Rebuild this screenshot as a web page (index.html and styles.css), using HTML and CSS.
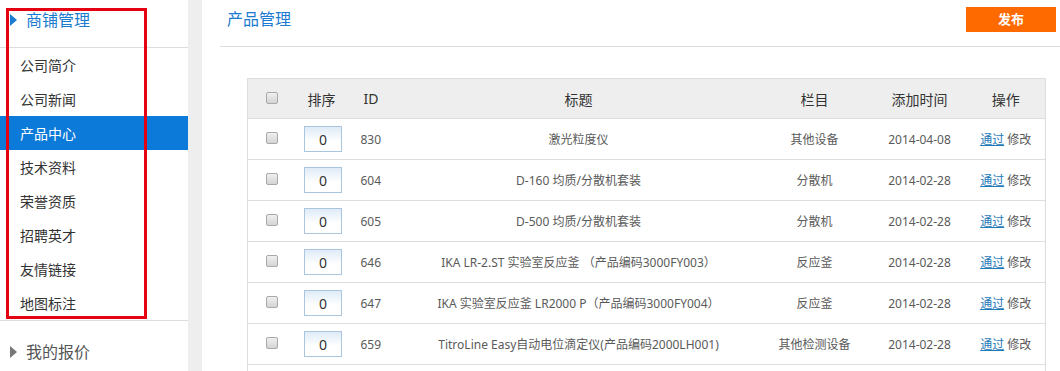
FILE: index.html
```html
<!DOCTYPE html>
<html lang="zh-CN">
<head>
<meta charset="utf-8">
<title>产品管理</title>
<link rel="stylesheet" href="styles.css">
</head>
<body>

<div id="container">
<div id="sidebar">
    <div class="menu-head active"><span class="arrow"></span>商铺管理</div>
    <ul class="menu">
        <li>公司简介</li>
        <li>公司新闻</li>
        <li class="on">产品中心</li>
        <li>技术资料</li>
        <li>荣誉资质</li>
        <li>招聘英才</li>
        <li>友情链接</li>
        <li>地图标注</li>
    </ul>
    <div class="menu-head closed"><span class="arrow"></span>我的报价</div>
    <div class="mark"></div>
</div>

<div id="gutter"></div>

<div id="main">
    <div id="header">
        <span class="title">产品管理</span>
        <a class="btn-publish">发布</a>
    </div>

    <table class="list">
        <colgroup>
            <col class="c-chk"><col class="c-sort"><col class="c-id"><col class="c-title">
            <col class="c-cat"><col class="c-date"><col class="c-op">
        </colgroup>
        <tr class="head">
            <td><span class="chk"></span></td>
            <td>排序</td>
            <td class="id">ID</td>
            <td>标题</td>
            <td>栏目</td>
            <td>添加时间</td>
            <td>操作</td>
        </tr>
        <tr>
            <td><span class="chk"></span></td>
            <td><input class="sort" type="text" value="0"></td>
            <td class="id">830</td>
            <td>激光粒度仪</td>
            <td>其他设备</td>
            <td>2014-04-08</td>
            <td><a class="pass">通过</a> 修改</td>
        </tr>
        <tr>
            <td><span class="chk"></span></td>
            <td><input class="sort" type="text" value="0"></td>
            <td class="id">604</td>
            <td>D-160 均质/分散机套装</td>
            <td>分散机</td>
            <td>2014-02-28</td>
            <td><a class="pass">通过</a> 修改</td>
        </tr>
        <tr>
            <td><span class="chk"></span></td>
            <td><input class="sort" type="text" value="0"></td>
            <td class="id">605</td>
            <td>D-500 均质/分散机套装</td>
            <td>分散机</td>
            <td>2014-02-28</td>
            <td><a class="pass">通过</a> 修改</td>
        </tr>
        <tr>
            <td><span class="chk"></span></td>
            <td><input class="sort" type="text" value="0"></td>
            <td class="id">646</td>
            <td>IKA LR-2.ST 实验室反应釜 （产品编码3000FY003）</td>
            <td>反应釜</td>
            <td>2014-02-28</td>
            <td><a class="pass">通过</a> 修改</td>
        </tr>
        <tr>
            <td><span class="chk"></span></td>
            <td><input class="sort" type="text" value="0"></td>
            <td class="id">647</td>
            <td>IKA 实验室反应釜 LR2000 P（产品编码3000FY004）</td>
            <td>反应釜</td>
            <td>2014-02-28</td>
            <td><a class="pass">通过</a> 修改</td>
        </tr>
        <tr>
            <td><span class="chk"></span></td>
            <td><input class="sort" type="text" value="0"></td>
            <td class="id">659</td>
            <td>TitroLine Easy自动电位滴定仪(产品编码2000LH001)</td>
            <td>其他检测设备</td>
            <td>2014-02-28</td>
            <td><a class="pass">通过</a> 修改</td>
        </tr>
        <tr class="more">
            <td></td><td></td><td></td><td></td><td></td><td></td><td></td>
        </tr>
    </table>
</div>
</div>

</body>
</html>
```

FILE: styles.css
```css
html, body {
    margin: 0px;
    padding: 0px;
    height: 100%;
    overflow: hidden;
}

body {
    font-family: "Noto Sans", "Noto Sans CJK SC", sans-serif;
    font-size: 12px;
    color: #5a5a5a;
    background-color: #ffffff;
}

#container {
    display: flex;
    min-height: 100%;
}

/* left menu */
#sidebar {
    position: relative;
    width: 188px;
    flex: none;
    background-color: #ffffff;
}

.menu-head {
    height: 24px;
    line-height: 24px;
    padding: 8px 0px 15px 10px;
    font-size: 16px;
    color: #555555;
    border-bottom: 1px solid #dddddd;
    display: flex;
    align-items: center;
}

.menu-head.active {
    color: #1b7bd0;
}

.menu-head.closed {
    padding-top: 19px;
    border-bottom: 0px;
}

.arrow {
    width: 0px;
    height: 0px;
    margin-right: 9px;
    border-left: 7px solid #777777;
    border-top: 6px solid transparent;
    border-bottom: 6px solid transparent;
}

.active .arrow {
    border-left-color: #1b7bd0;
}

.menu {
    list-style: none;
    margin: 0px;
    padding: 0px;
    border-bottom: 1px solid #dddddd;
}

.menu li {
    height: 34px;
    line-height: 36px;
    padding-left: 20px;
    font-size: 14px;
    color: #333333;
}

.menu li.on {
    background-color: #0c7ad9;
    color: #ffffff;
}

.mark {
    position: absolute;
    left: 6px;
    top: 8px;
    width: 135px;
    height: 305px;
    border: 3px solid #e50012;
}

#gutter {
    width: 14px;
    flex: none;
    background-color: #eeeeee;
}

/* main */
#main {
    flex: 1;
    padding-left: 18px;
}

#header {
    height: 46px;
    border-bottom: 1px solid #dddddd;
    display: flex;
    justify-content: space-between;
    align-items: flex-start;
    padding-right: 4px;
}

.title {
    margin: 7px 0px 0px 7px;
    line-height: 24px;
    font-size: 16px;
    color: #1b7bd0;
}

.btn-publish {
    margin-top: 7px;
    width: 90px;
    height: 25px;
    line-height: 25px;
    text-align: center;
    background-color: #ff6a00;
    color: #ffffff;
    font-size: 13px;
    font-weight: bold;
}

.list {
    margin: 31px 0px 0px 27px;
    width: 798px;
    table-layout: fixed;
    border-collapse: collapse;
    border: 1px solid #dddddd;
}

.c-chk { width: 48px; }
.c-sort { width: 52px; }
.c-id { width: 53px; }
.c-title { width: 356px; }
.c-cat { width: 116px; }
.c-date { width: 94px; }
.c-op { width: 79px; }

.list td {
    height: 40px;
    padding: 0px;
    text-align: center;
    white-space: nowrap;
    border-bottom: 1px solid #dddddd;
}

.list td.id {
    text-align: left;
    padding-left: 13px;
}

.list tr.head td {
    height: 39px;
    background-color: #eeeeee;
    font-size: 14px;
    color: #333333;
}

.list tr.head td.id {
    padding-left: 16px;
}

.chk {
    display: inline-block;
    width: 10px;
    height: 10px;
    margin-top: -4px;
    vertical-align: middle;
    border: 1px solid #a9a9a9;
    border-radius: 2px;
    background: linear-gradient(#f0f0f0, #d4d4d4);
}

.sort {
    box-sizing: border-box;
    width: 38px;
    height: 26px;
    margin: 0px 0px 0px 3px;
    padding: 0px;
    vertical-align: middle;
    text-align: center;
    font-family: "Noto Sans", sans-serif;
    font-size: 14px;
    color: #333333;
    border: 1px solid #a9c6de;
    background: linear-gradient(#dfebf7, #ffffff 60%);
    outline: none;
}

.pass {
    color: #1f7ab8;
    text-decoration: underline;
}
```
